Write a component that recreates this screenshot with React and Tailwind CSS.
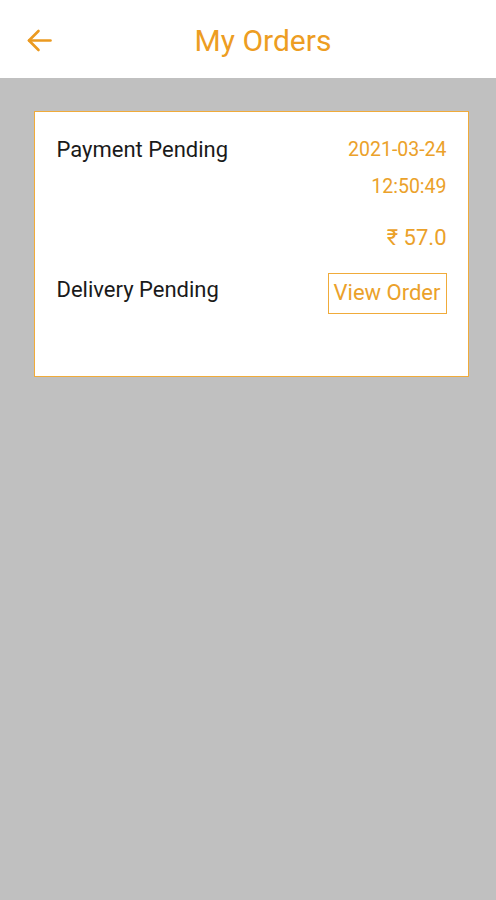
import React from "react";

export default function App() {
  return (
    <div className="w-[496px] h-[900px] bg-[#c0c0c0] flex flex-col" style={{ fontFamily: "Roboto, 'Noto Sans', sans-serif" }}>
      <div className="h-[78px] bg-white relative flex items-center justify-center shrink-0">
        <svg className="absolute left-[27px] top-[29px]" width="25" height="23" viewBox="0 0 25 23" fill="none" stroke="#eb9a20" strokeWidth="2.6" strokeLinecap="round" strokeLinejoin="round">
          <path d="M23.5 11.5H2" />
          <path d="M11.5 2L2 11.5l9.5 9.5" />
        </svg>
        <span className="text-[30px] text-[#ed9d22] leading-none mt-[4px] ml-[30px]">My Orders</span>
      </div>
      <div className="px-[34px] pt-[33px]">
        <div className="bg-white border-[1.5px] border-[#f0ab3a] h-[266px] w-[435px] pl-[21.5px] pr-[21.5px] pt-[27px] flex flex-col">
          <div className="flex justify-between items-start">
            <span className="text-[22px] text-[#1a1a1a] leading-none">Payment Pending</span>
            <div className="flex flex-col items-end text-[#eba12a] text-[19.5px] leading-none">
              <span className="mt-[1px]">2021-03-24</span>
              <span className="mt-[17.5px]">12:50:49</span>
              <span className="mt-[30px] text-[22px]">₹ 57.0</span>
            </div>
          </div>
          <div className="flex justify-between items-start mt-[24px]">
            <span className="text-[22px] text-[#1a1a1a] leading-none mt-[6px]">Delivery Pending</span>
            <div className="border-[1.5px] border-[#f0ab3a] h-[41px] w-[119px] flex items-center justify-center text-[22px] text-[#eba12a] leading-none">
              View Order
            </div>
          </div>
        </div>
      </div>
    </div>
  );
}
